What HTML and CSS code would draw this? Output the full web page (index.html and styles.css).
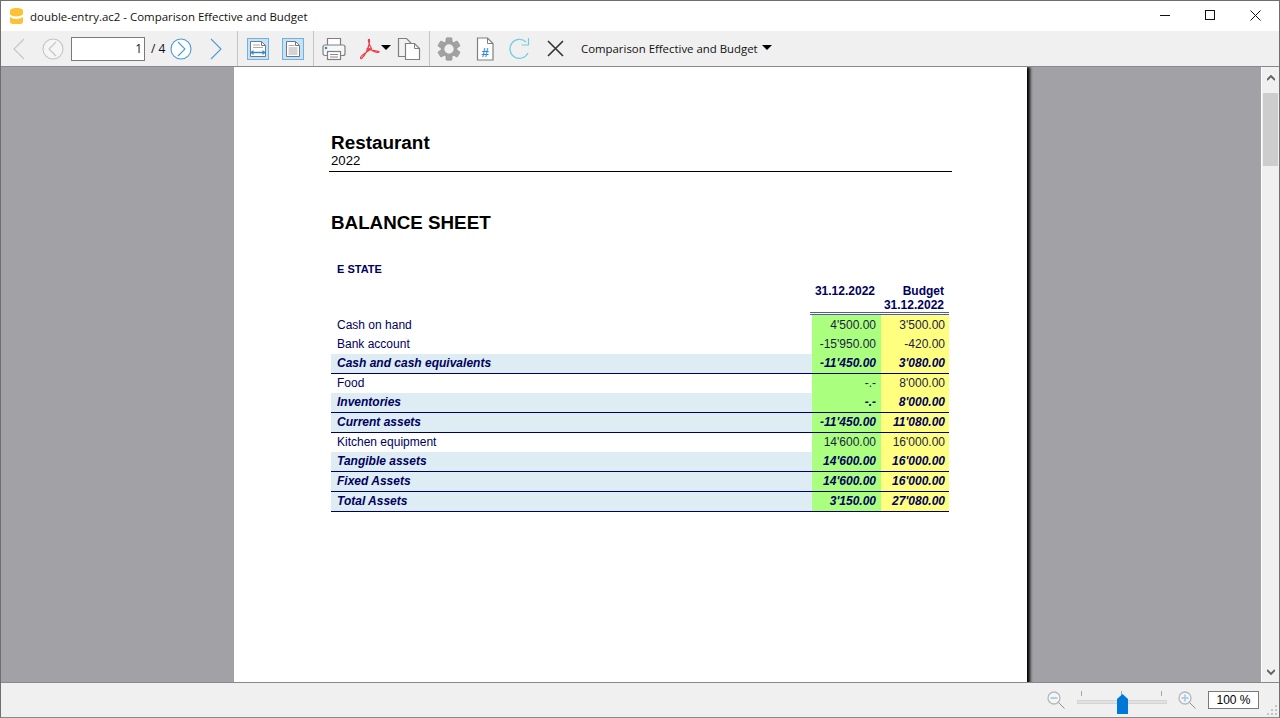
FILE: index.html
```html
<!DOCTYPE html>
<html lang="en">
<head>
<meta charset="utf-8">
<title>double-entry.ac2 - Comparison Effective and Budget</title>
<link rel="stylesheet" href="styles.css">
</head>
<body>
<div class="window">
  <header class="titlebar">
    <svg class="app-icon" width="13" height="16" viewBox="0 0 13 16"><path d="M0 3C0 1 2 0 6.500 0S13 1 13 3v10c0 2-1 3-2.500 3h-8C1 16 0 15 0 13z" fill="#fdc136"/><path d="M0 6.500c3 2.500 9 2.500 13 0v2.500c-4 2.500-10 2.500-13 0z" fill="#fff"/></svg>
    <span class="title">double-entry.ac2 - Comparison Effective and Budget</span>
    <div class="winbtns">
      <svg width="10" height="10" viewBox="0 0 10 10"><path d="M0 5.500h10" stroke="#111" fill="none"/></svg>
      <svg width="10" height="10" viewBox="0 0 10 10"><rect x=".5" y=".5" width="9" height="9" stroke="#111" fill="none"/></svg>
      <svg width="11" height="11" viewBox="0 0 11 11"><path d="M.5.500l10 10M10.500.500l-10 10" stroke="#111" fill="none"/></svg>
    </div>
  </header>
  <nav class="toolbar">
    <svg class="i-prev-end" width="12" height="22" viewBox="0 0 12 22"><path d="M11 1L1 11l10 10" fill="none" stroke="#c4c4c4" stroke-width="1.100"/></svg>
    <svg class="i-prev" width="22" height="22" viewBox="0 0 22 22"><circle cx="11" cy="11" r="10" fill="#f5f5f5" stroke="#c4c4c4" stroke-width="1.100"/><path d="M14 4l-7 7 7 7" fill="none" stroke="#c4c4c4" stroke-width="1.100"/></svg>
    <input class="pagebox" value="1" aria-label="Page">
    <span class="pagecount">/ 4</span>
    <svg class="i-next" width="22" height="22" viewBox="0 0 22 22"><circle cx="11" cy="11" r="10" fill="#fff" stroke="#4a9bd6" stroke-width="1.100"/><path d="M8 4l7 7-7 7" fill="none" stroke="#4a9bd6" stroke-width="1.100"/></svg>
    <svg class="i-next-end" width="12" height="22" viewBox="0 0 12 22"><path d="M1 1l10 10L1 21" fill="none" stroke="#4a9bd6" stroke-width="1.100"/></svg>
    <span class="sep s1"></span>
    <svg class="i-w" width="22" height="22" viewBox="0 0 22 22"><rect x=".5" y=".5" width="21" height="21" fill="#c6e2f6" stroke="#6cb2e4"/><path d="M3.500 3.500h11l4 4v11h-15z" fill="#fff" stroke="#777"/><path d="M14.500 3.500v4h4" fill="none" stroke="#777"/><path d="M6 7h7M6 9.500h10" stroke="#aaa"/><path d="M5 14.500h12" stroke="#2d8bd0" stroke-width="1.500"/><path d="M6.500 12l-3.500 2.500L6.500 17zM15.500 12l3.500 2.500-3.500 2.500z" fill="#2d8bd0"/></svg>
    <svg class="i-p" width="22" height="22" viewBox="0 0 22 22"><rect x=".5" y=".5" width="21" height="21" fill="#c6e2f6" stroke="#6cb2e4"/><path d="M4.500 3.500h9l4 4v11h-13z" fill="#fff" stroke="#777"/><path d="M13.500 3.500v4h4" fill="none" stroke="#777"/><path d="M6.500 7.500h6M6.500 10h9M6.500 12h9M6.500 14h9M6.500 16h9" stroke="#aaa" stroke-width="1.200"/></svg>
    <span class="sep s2"></span>
    <svg class="i-print" width="24" height="24" viewBox="0 0 24 24"><path d="M5.500 8V1.500h13V8" fill="#fff" stroke="#7f7f7f" stroke-width="1.200"/><rect x="1" y="8" width="22" height="10.500" rx="2" fill="#f7f7f7" stroke="#7f7f7f" stroke-width="1.200"/><rect x="5.500" y="14.500" width="13" height="8" fill="#fff" stroke="#7f7f7f" stroke-width="1.200"/><path d="M8 17.500h8M8 20h8" stroke="#8a8a8a"/><circle cx="4" cy="11" r="1.300" fill="#2d8bd0"/></svg>
    <svg class="i-pdf" width="21" height="22" viewBox="0 0 21 22"><path d="M1.500 20c-1-2 7-6 11-9.500C10 6 9 3 9.500 1.500c1-1 1.500 1 .5 5C9 11 6 17 3 20c-1 1-1.500 .500-1.500 0zM8 11c3 1 9 1.500 12 2.500 .5 1-3 1.500-6-.5C11 11 9 9 8 11z" fill="none" stroke="#ea3f45" stroke-width="1.200"/></svg>
    <span class="caret c1"></span>
    <svg class="i-copy" width="24" height="24" viewBox="0 0 24 24"><path d="M1.500 1.500h8l4 4v14h-12z" fill="#f2f2f2" stroke="#7f7f7f" stroke-width="1.200"/><path d="M8.500 6.500h9l5 5v11h-14z" fill="#fff" stroke="#7f7f7f" stroke-width="1.200"/><path d="M17.500 6.500v5h5" fill="none" stroke="#7f7f7f"/></svg>
    <span class="sep s3"></span>
    <svg class="i-gear" width="24" height="24" viewBox="0 0 24 24"><g fill="#a3a3a3" stroke="#8a8a8a" stroke-width=".6"><rect x="9" y="0.800" width="6" height="22.400" rx="1"/><rect x="9" y="0.800" width="6" height="22.400" rx="1" transform="rotate(60 12 12)"/><rect x="9" y="0.800" width="6" height="22.400" rx="1" transform="rotate(120 12 12)"/></g><circle cx="12" cy="12" r="6.500" fill="#f0f0f0" stroke="#a0a0a0" stroke-width="3.600"/></svg>
    <svg class="i-num" width="18" height="24" viewBox="0 0 18 24"><path d="M1.500 1h10l5.500 5.500V23H1.500z" fill="#fff" stroke="#7f7f7f" stroke-width="1.200"/><path d="M11.500 1v5.500H17" fill="none" stroke="#7f7f7f"/><text class="hash" x="9" y="20">#</text></svg>
    <svg class="i-reload" width="22" height="22" viewBox="0 0 22 22"><path d="M20 15a9.500 9.500 0 1 1-2-11" fill="none" stroke="#6fcfdc" stroke-width="1.200"/><path d="M20.500 0v7h-7" fill="none" stroke="#6fcfdc" stroke-width="1.200"/></svg>
    <svg class="i-x" width="17" height="17" viewBox="0 0 17 17"><path d="M1 1l15 15M16 1L1 16" stroke="#333" stroke-width="1.600" fill="none"/></svg>
    <span class="combo">Comparison Effective and Budget</span>
    <span class="caret c2"></span>
  </nav>
  <div class="main">
    <div class="viewport">
      <article class="page">
        <div class="head">
          <h1>Restaurant</h1>
          <p>2022</p>
        </div>
        <h2>BALANCE SHEET</h2>
        <h3>E STATE</h3>
        <div class="sheet">
          <div class="hrow">
            <span class="hlabel"></span>
            <span class="hval">31.12.2022</span>
            <span class="hval">Budget<br>31.12.2022</span>
          </div>
          <div class="row first"><span class="lab">Cash on hand</span><span class="eff">4'500.00</span><span class="bud">3'500.00</span></div>
          <div class="row"><span class="lab">Bank account</span><span class="eff">-15'950.00</span><span class="bud">-420.00</span></div>
          <div class="row total line"><span class="lab">Cash and cash equivalents</span><span class="eff">-11'450.00</span><span class="bud">3'080.00</span></div>
          <div class="row"><span class="lab">Food</span><span class="eff">-.-</span><span class="bud">8'000.00</span></div>
          <div class="row total line"><span class="lab">Inventories</span><span class="eff">-.-</span><span class="bud">8'000.00</span></div>
          <div class="row total line"><span class="lab">Current assets</span><span class="eff">-11'450.00</span><span class="bud">11'080.00</span></div>
          <div class="row"><span class="lab">Kitchen equipment</span><span class="eff">14'600.00</span><span class="bud">16'000.00</span></div>
          <div class="row total line"><span class="lab">Tangible assets</span><span class="eff">14'600.00</span><span class="bud">16'000.00</span></div>
          <div class="row total line"><span class="lab">Fixed Assets</span><span class="eff">14'600.00</span><span class="bud">16'000.00</span></div>
          <div class="row total line"><span class="lab">Total Assets</span><span class="eff">3'150.00</span><span class="bud">27'080.00</span></div>
        </div>
      </article>
    </div>
    <aside class="scrollbar">
      <svg width="8" height="6" viewBox="0 0 8 6"><path d="M0 5l4-4 4 4" fill="none" stroke="#606060" stroke-width="1.800"/></svg>
      <span class="thumb"></span>
      <span class="track"></span>
      <svg width="8" height="6" viewBox="0 0 8 6"><path d="M0 1l4 4 4-4" fill="none" stroke="#606060" stroke-width="1.800"/></svg>
    </aside>
  </div>
  <footer class="status">
    <svg class="zoomout" width="18" height="18" viewBox="0 0 18 18"><circle cx="7" cy="7" r="6" fill="#f5f5f5" stroke="#b8b8b8" stroke-width="1.300"/><path d="M3.500 7h7" stroke="#a8d3ee" stroke-width="2"/><path d="M11.500 11.500l6 6" stroke="#909090"/></svg>
    <div class="slider">
      <span class="tick t1"></span><span class="tick t2"></span><span class="tick t3"></span>
      <span class="groove"></span>
      <svg class="knob" width="11" height="20" viewBox="0 0 11 20"><path d="M5.500 0L11 5v15H0V5z" fill="#0078d7"/></svg>
    </div>
    <svg class="zoomin" width="18" height="18" viewBox="0 0 18 18"><circle cx="7" cy="7" r="6" fill="#f5f5f5" stroke="#b8b8b8" stroke-width="1.300"/><path d="M3.500 7h7M7 3.500v7" stroke="#a8d3ee" stroke-width="2"/><path d="M11.500 11.500l6 6" stroke="#909090"/></svg>
    <span class="zoombox">100 %</span>
    <svg class="grip" width="11" height="11" viewBox="0 0 11 11"><path d="M8 0h2v2H8zM4 4h2v2H4zM8 4h2v2H8zM0 8h2v2H0zM4 8h2v2H4zM8 8h2v2H8z" fill="#c4c4c4"/></svg>
  </footer>
</div>
</body>
</html>
```
FILE: styles.css
```css
* { box-sizing: border-box; }
html, body { margin: 0; padding: 0; height: 100%; overflow: hidden; background: #fff; }
.window {
  width: 1280px; height: 718px; display: flex; flex-direction: column;
  border: 1px solid #6e6e6e; border-bottom-color: #8a8a8a;
  font-family: "Open Sans", "Noto Sans", sans-serif; color: #000;
}
.titlebar { height: 30px; flex: none; display: flex; align-items: center; background: #fff; padding-left: 9px; }
.app-icon { flex: none; margin-top: -1px; }
.title { margin-left: 7px; font-size: 11.46px; color: #111; white-space: nowrap; }
.winbtns { margin-left: auto; display: flex; align-items: center; gap: 35px; padding-right: 18px; margin-top: -2px; }
.toolbar {
  height: 36px; flex: none; display: flex; align-items: center; background: #f0f0f0;
  border-bottom: 1px solid #868a8e; padding-left: 12px; position: relative;
}
.toolbar svg { flex: none; display: block; }
.i-prev-end { margin-left: 0; }
.i-prev { margin-left: 17px; }
.pagebox {
  width: 74px; height: 24px; margin-left: 7px; border: 1px solid #7a7a7a; background: #fff;
  text-align: right; font: 12px "Open Sans", sans-serif; padding: 0 2px 0 0; color: #111;
}
.pagecount { font-size: 12px; margin-left: 6px; width: 19px; color: #111; }
.i-next { margin-left: 0; }
.i-next-end { margin-left: 18px; }
.sep { width: 1px; height: 35px; background: #c4c4c4; flex: none; align-self: flex-start; }
.s1 { margin-left: 15px; }
.i-w { margin-left: 9px; }
.i-p { margin-left: 13px; }
.s2 { margin-left: 9px; }
.i-print { margin-left: 8px; }
.i-pdf { margin-left: 13px; }
.caret { width: 0; height: 0; border-left: 5px solid transparent; border-right: 5px solid transparent; border-top: 5px solid #000; flex: none; }
.c1 { margin-left: 1px; margin-top: -3px; }
.i-copy { margin-left: 6px; }
.s3 { margin-left: 8px; }
.i-gear { margin-left: 7px; }
.i-num { margin-left: 15px; }
.i-reload { margin-left: 14px; }
.i-x { margin-left: 17px; }
.combo { margin-left: 17px; font-size: 11.4px; color: #111; white-space: nowrap; }
.c2 { margin-left: 4px; margin-top: -3px; }
.hash { font: bold 13px "Liberation Sans", sans-serif; fill: #2d8bd0; text-anchor: middle; }

.main { flex: 1; min-height: 0; display: flex; background: #a2a1a5; }
.viewport { flex: 1; min-width: 0; overflow: hidden; display: flex; }
.page {
  width: 793px; height: 1122px; margin-left: 233px; flex: none; background: #fff;
  box-shadow: 3px 0 3px #000; padding: 66px 0 0 95px;
  font-family: "Liberation Sans", Arial, sans-serif;
}
.head { width: 623px; height: 39px; border-bottom: 1px solid #000; padding-left: 2px; }
h1 { margin: 0; font-size: 18.9px; line-height: 20px; font-weight: bold; }
.head p { margin: 0; font-size: 13.2px; line-height: 15px; }
h2 { margin: 40px 0 0 2px; font-size: 18.8px; line-height: 22px; font-weight: bold; }
h3 { margin: 28px 0 0 8px; font-size: 11px; line-height: 14px; font-weight: bold; color: #000060; }
.sheet { margin: 7px 0 0 2px; width: 618px; color: #000060; font-size: 12px; }
.hrow { display: grid; grid-template-columns: 479px 70px 69px; height: 32px; }
.hval { font-weight: bold; text-align: right; padding-right: 5px; line-height: 14px; border-bottom: 3px double #555a98; padding-top: 1px; }
.row { display: grid; grid-template-columns: 481px 69px 68px; height: 19px; line-height: 19px; }
.row.first { height: 20px; }
.row.first span { padding-top: 1px; }
.row.line { height: 20px; border-bottom: 1px solid #000060; }
.lab { padding-left: 6px; }
.eff, .bud { text-align: right; padding-right: 5px; }
.eff { background: #aaff7f; color: #1c1c40; }
.bud { background: #ffff7f; padding-right: 4px; color: #1c1c40; }
.total { font-weight: bold; font-style: italic; }
.total .lab { background: #deecf4; }
.total .eff, .total .bud { color: #000060; }

.scrollbar { width: 18px; flex: none; background: #f0f0f0; border-left: 1px solid #fff; display: flex; flex-direction: column; align-items: center; padding: 8px 0 7px; }
.thumb { width: 15px; height: 73px; margin-top: 12px; background: #cdcdcd; flex: none; }
.track { flex: 1; }
.status { height: 35px; flex: none; background: #f0f0f0; border-top: 1px solid #868a8e; display: flex; align-items: center; position: relative; padding-left: 1046px; }
.status svg { flex: none; display: block; }
.zoomout { margin-top: -1px; }
.slider { width: 90px; height: 24px; margin-left: 12px; position: relative; flex: none; }
.tick { position: absolute; top: 3px; width: 1px; height: 5px; background: #a8a89c; }
.t1 { left: 4px; } .t2 { left: 44px; } .t3 { left: 84px; }
.groove { position: absolute; left: 0; right: 0; top: 12px; height: 4px; background: #e2e2e2; border: 1px solid #d4d4d4; }
.knob { position: absolute; left: 40px; top: 6px; }
.zoomin { margin-left: 11px; margin-top: -1px; }
.zoombox { width: 51px; height: 18px; margin-left: 12px; border: 1px solid #7a7a7a; background: #fff; font: 12px/16px "Liberation Sans", sans-serif; text-align: center; flex: none; }
.grip { position: absolute; right: 1px; bottom: 1px; }
```
